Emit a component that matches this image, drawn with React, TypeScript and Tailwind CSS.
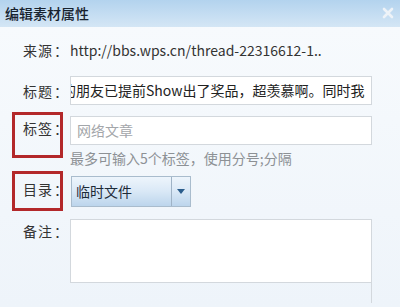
import React from 'react'

const font = { fontFamily: '"Noto Sans CJK SC", "Noto Sans", sans-serif' }

function Label({ text, marked, className = '' }: { text: string; marked?: boolean; className?: string }) {
  return (
    <div
      className={`ml-[12px] w-[51px] shrink-0 whitespace-nowrap border-[3px] pl-[8px] text-[14px] leading-[18px] text-[#333] ${
        marked ? 'border-[#b3282a]' : 'border-transparent'
      } ${className}`}
    >
      <span className="tracking-[1px]">{text}</span>
      <span className="ml-[1px]">：</span>
    </div>
  )
}

export default function App() {
  return (
    <div className="w-[400px] h-[307px] overflow-hidden bg-[#f1f6fb] flex flex-col" style={font}>
      <div className="h-[27px] shrink-0 flex items-center justify-between pl-[5px] pr-[6px] bg-gradient-to-b from-[#b3d3ee] to-[#d4e6f5]">
        <span className="text-[14px] text-[#17222e] font-medium">编辑素材属性</span>
        <svg width="12" height="12" viewBox="0 0 12 12" className="mb-[2px]">
          <path d="M2 2 L10 10 M10 2 L2 10" stroke="#eef3f8" strokeWidth="2.6" strokeLinecap="round" />
        </svg>
      </div>

      <div className="flex-1 flex flex-col bg-gradient-to-b from-[#f7fafd] to-[#eef4fa]">
        <div className="mt-[13px] flex items-center h-[20px]">
          <Label text="来源" />
          <span className="ml-[7px] text-[14px] text-[#333]">http://bbs.wps.cn/thread-22316612-1..</span>
        </div>

        <div className="mt-[16px] flex items-center">
          <Label text="标题" />
          <div className="ml-[7px] w-[302px] h-[29px] bg-white border border-[#d3d8dd] overflow-hidden flex items-center pl-[3px] pr-[2px]">
            <span className="whitespace-nowrap text-[14px] text-[#222] ml-[-12px]">的朋友已提前Show出了奖品，超羡慕啊。同时我</span>
          </div>
        </div>

        <div className="mt-[7px] flex items-start">
          <Label text="标签" marked className="h-[46px] pt-[4px]" />
          <div className="ml-[7px] flex flex-col">
            <div className="mt-[4px] w-[302px] h-[29px] bg-white border border-[#d3d8dd] flex items-center pl-[6px]">
              <span className="text-[14px] text-[#a3a6aa]">网络文章</span>
            </div>
            <span className="mt-[5px] text-[14px] leading-[16px] text-[#8d9195]">最多可输入5个标签，使用分号;分隔</span>
          </div>
        </div>

        <div className="mt-[5px] flex items-start">
          <Label text="目录" marked className="h-[40px] pt-[6px]" />
          <div className="ml-[8px] mt-[5px] w-[120px] h-[31px] flex border border-[#a9bccd] bg-gradient-to-b from-[#eef5fc] via-[#d9e8f6] to-[#bcd5ec]">
            <span className="flex-1 flex items-center pl-[4px] text-[14px] text-[#1d2a38]">临时文件</span>
            <div className="w-[19px] border-l border-[#9fb3c6] flex items-center justify-center">
              <svg width="8" height="5" viewBox="0 0 8 5">
                <path d="M0 0 L8 0 L4 5 Z" fill="#2b5d8c" />
              </svg>
            </div>
          </div>
        </div>

        <div className="mt-[8px] flex items-start">
          <Label text="备注" />
          <div className="ml-[7px] flex flex-col">
            <div className="w-[302px] h-[64px] bg-white border border-[#d3d8dd]" />
            <div className="w-[302px] h-[20px] border-r border-[#d3d8dd]" />
          </div>
        </div>
      </div>
    </div>
  )
}
